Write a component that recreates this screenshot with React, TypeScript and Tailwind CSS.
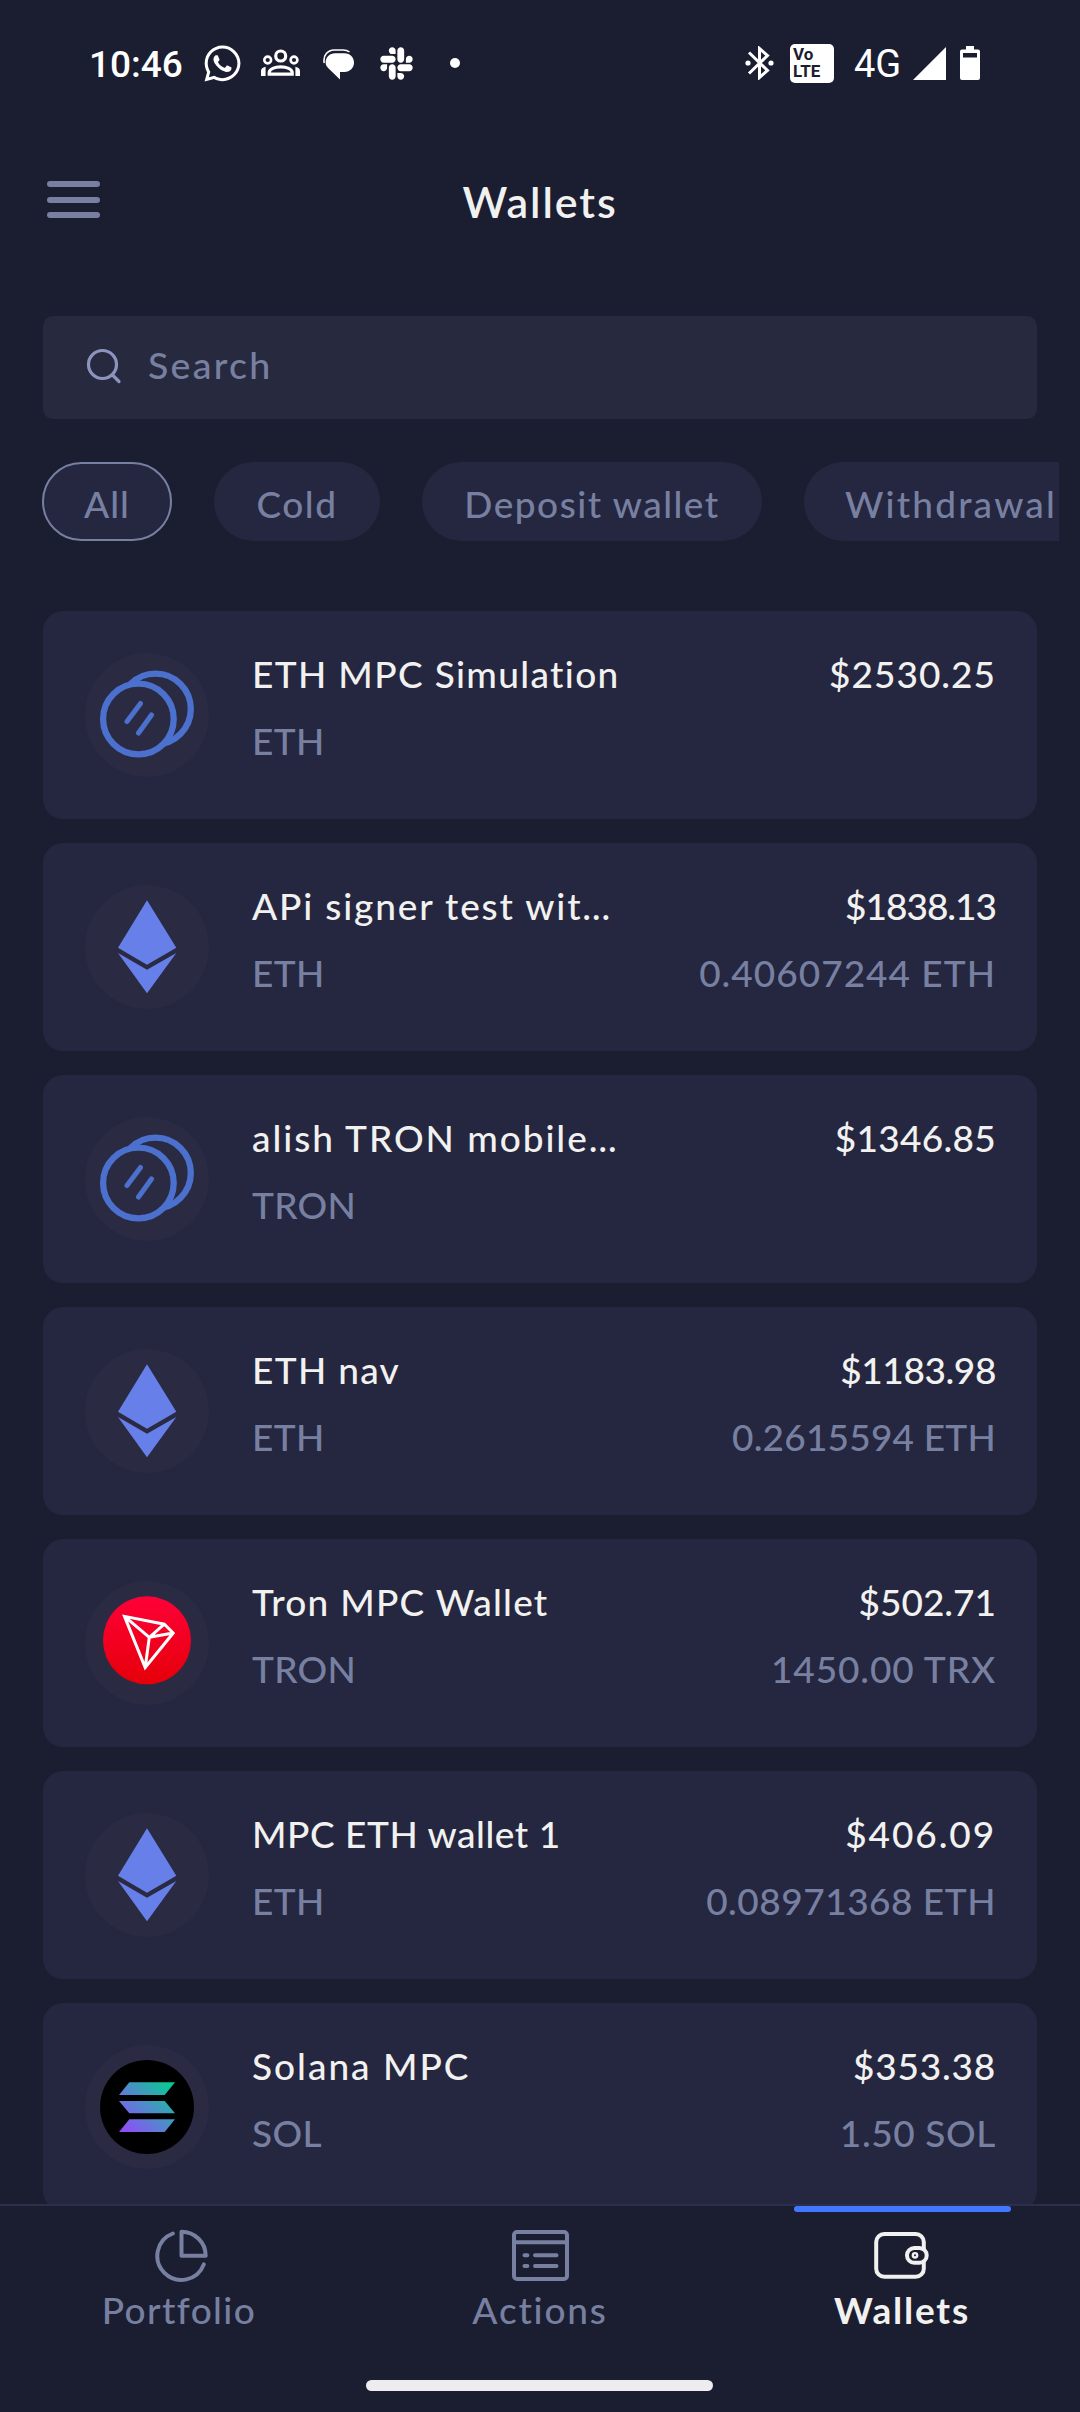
import React from "react";
import { FaSlack, FaWhatsapp } from "react-icons/fa";

type Coin = "multi" | "eth" | "tron" | "sol";

type Wallet = {
  name: string;
  nameClass: string;
  chain: string;
  fiat: string;
  fiatClass: string;
  amount?: string;
  amountClass?: string;
  coin: Coin;
};

const wallets: Wallet[] = [
  {
    name: "ETH MPC Simulation",
    nameClass: "tracking-[1.35px]",
    chain: "ETH",
    fiat: "$2530.25",
    fiatClass: "tracking-[1px]",
    coin: "multi",
  },
  {
    name: "APi signer test wit…",
    nameClass: "tracking-[1.85px]",
    chain: "ETH",
    fiat: "$1838.13",
    fiatClass: "tracking-[-1px]",
    amount: "0.40607244 ETH",
    amountClass: "tracking-[1px]",
    coin: "eth",
  },
  {
    name: "alish TRON mobile…",
    nameClass: "tracking-[1.95px]",
    chain: "TRON",
    fiat: "$1346.85",
    fiatClass: "tracking-[0.3px]",
    coin: "multi",
  },
  {
    name: "ETH nav",
    nameClass: "tracking-[1.3px]",
    chain: "ETH",
    fiat: "$1183.98",
    fiatClass: "tracking-[-0.4px]",
    amount: "0.2615594 ETH",
    amountClass: "tracking-[0.2px]",
    coin: "eth",
  },
  {
    name: "Tron MPC Wallet",
    nameClass: "tracking-[1.25px]",
    chain: "TRON",
    fiat: "$502.71",
    fiatClass: "tracking-normal",
    amount: "1450.00 TRX",
    amountClass: "tracking-[0.9px]",
    coin: "tron",
  },
  {
    name: "MPC ETH wallet 1",
    nameClass: "tracking-[0.55px]",
    chain: "ETH",
    fiat: "$406.09",
    fiatClass: "tracking-[1.9px]",
    amount: "0.08971368 ETH",
    amountClass: "tracking-[0.5px]",
    coin: "eth",
  },
  {
    name: "Solana MPC",
    nameClass: "tracking-[2px]",
    chain: "SOL",
    fiat: "$353.38",
    fiatClass: "tracking-[0.8px]",
    amount: "1.50 SOL",
    amountClass: "tracking-[0.6px]",
    coin: "sol",
  },
];

const filters = [
  { label: "All", className: "w-[130px] tracking-[1px]", active: true },
  { label: "Cold", className: "w-[166px] tracking-[1.5px]" },
  { label: "Deposit wallet", className: "w-[340px] tracking-[1.5px]" },
  { label: "Withdrawal", className: "w-[294px] tracking-[2.2px]" },
];

function StatusBar() {
  return (
    <div className="flex h-[126px] shrink-0 items-center pl-[89px] pr-[100px] font-[Roboto,sans-serif] text-white">
      <span className="w-[115px] pt-[3px] text-[37px] font-medium leading-none">10:46</span>
      <FaWhatsapp className="-ml-[2px] size-[41px]" />
      <svg className="ml-[18px]" width="39" height="28" viewBox="0 0 39 28" fill="none" stroke="currentColor">
        <circle cx="19.7" cy="7" r="5" strokeWidth="3.2" />
        <circle cx="6.7" cy="11" r="3.4" strokeWidth="2.6" />
        <circle cx="33" cy="11" r="3.4" strokeWidth="2.6" />
        <path d="M8.2 25.2v-1.6c0-3.6 5.6-5.8 11.5-5.8s11.5 2.2 11.5 5.8v1.6z" strokeWidth="3.2" />
        <path d="M0 27v-5c0-2 1.5-3.6 4.6-4.2v9.2zM39 27v-5c0-2-1.5-3.6-4.6-4.2v9.2z" fill="currentColor" stroke="none" />
      </svg>
      <svg className="ml-[23px] mt-[2px]" width="32" height="31" viewBox="0 0 32 31" fill="none">
        <path d="M1.2 14C-.2 6 5 1.2 11 1h9c3 0 5 .8 6.5 2" stroke="currentColor" strokeWidth="1.6" />
        <path
          d="M12 4.200h9.500c5.500 0 9.500 4 9.500 9.400s-4 9.400-9.500 9.400H17v7.500L5.600 19.500C3.600 17.800 2.600 16 2.600 13.600c0-5.400 4-9.400 9.400-9.400z"
          fill="currentColor"
        />
      </svg>
      <FaSlack className="ml-[23px] size-[37px]" />
      <span className="ml-[35px] size-[10px] rounded-full bg-white" />

      <div className="ml-auto flex items-center">
        <svg width="29" height="34" viewBox="0 0 29 34" fill="none" stroke="currentColor" strokeWidth="3">
          <path d="M4 6.500L22.500 24.500 14.500 31.500V2.500L22.500 9.500 4 27.500" />
          <circle cx="3" cy="17" r="2.600" fill="currentColor" stroke="none" />
          <circle cx="26" cy="17" r="2.600" fill="currentColor" stroke="none" />
        </svg>
        <div className="ml-[16px] flex h-[39px] w-[44px] flex-col justify-center rounded-[5px] bg-white pl-[3px] text-[17px] font-bold leading-[17px] text-[#1b1d31]">
          <span>Vo</span>
          <span>LTE</span>
        </div>
        <span className="ml-[20px] w-[59px] pt-[2px] text-[38px] font-normal leading-none">4G</span>
        <svg width="33" height="33" viewBox="0 0 33 33" fill="currentColor">
          <path d="M33 0v33H0z" />
        </svg>
        <svg className="ml-[14px]" width="20" height="34" viewBox="0 0 20 34" fill="currentColor">
          <path
            fillRule="evenodd"
            d="M6 0h8v3.500h4a2 2 0 0 1 2 2V32a2 2 0 0 1-2 2H2a2 2 0 0 1-2-2V5.500a2 2 0 0 1 2-2h4zM3 7v4.500h14V7z"
          />
        </svg>
      </div>
    </div>
  );
}

function Header() {
  return (
    <header className="grid h-[154px] shrink-0 grid-cols-3 px-[47px] pt-[50px]">
      <button className="mt-[5px] flex h-[37px] w-[53px] flex-col justify-between" aria-label="Menu">
        <span className="h-[6px] w-full rounded-full bg-[#7780a0]" />
        <span className="h-[6px] w-full rounded-full bg-[#7780a0]" />
        <span className="h-[6px] w-full rounded-full bg-[#7780a0]" />
      </button>
      <h1 className="text-center text-[43px] font-semibold leading-[52px] tracking-[1.9px] text-[#f1f1ef]">Wallets</h1>
    </header>
  );
}

function SearchBox() {
  return (
    <div className="mx-[43px] mt-[36px] flex h-[103px] shrink-0 items-center rounded-[10px] bg-[#27293f] pl-[43px]">
      <svg className="-mt-[4px]" width="36" height="36" viewBox="0 0 36 36" fill="none" stroke="#8c94bd" strokeWidth="3.200" strokeLinecap="round">
        <circle cx="16.500" cy="16.500" r="14" />
        <path d="M26.500 27L33 33.500" />
      </svg>
      <span className="-mt-[5px] ml-[26px] text-[37.5px] leading-none tracking-[2.3px]">Search</span>
    </div>
  );
}

function Filters() {
  return (
    <div className="ml-[42px] mr-[21px] mt-[43px] flex h-[79px] shrink-0 gap-[42px] overflow-hidden">
      {filters.map((filter) => (
        <button
          key={filter.label}
          className={`flex shrink-0 items-center justify-center whitespace-nowrap rounded-full bg-[#252640] pt-[3px] text-[37px] leading-none ${filter.className} ${
            filter.active ? "border-2 border-[#7780a0]" : ""
          }`}
        >
          {filter.label}
        </button>
      ))}
    </div>
  );
}

function CoinIcon({ coin }: { coin: Coin }) {
  return (
    <svg className="shrink-0" width="124" height="124" viewBox="0 0 124 124" fill="none">
      <circle cx="62" cy="62" r="62" fill="#2a2b42" />
      {coin === "multi" && (
        <g stroke="#4b70ce" strokeWidth="6.300" strokeLinecap="round">
          <circle cx="70.500" cy="56" r="35.300" />
          <circle cx="53.400" cy="66" r="35.300" fill="#2a2b42" />
          <path d="M55.500 50.500L42 68.500M66.500 62L53.500 80" strokeWidth="5" />
        </g>
      )}
      {coin === "eth" && (
        <g fill="#6780e9">
          <path d="M62 15.300L91.300 62.700 62 79.700 33 62.700z" />
          <path d="M33 68L62 84.700 91.300 68 62 108.300z" />
        </g>
      )}
      {coin === "tron" && (
        <>
          <defs>
            <linearGradient id="tron" x1="0" y1="0" x2="0" y2="1">
              <stop stopColor="#ff0038" />
              <stop offset="1" stopColor="#e50009" />
            </linearGradient>
          </defs>
          <circle cx="62" cy="59.300" r="44" fill="url(#tron)" />
          <path
            d="M39.500 35.400L79.300 43.200 88.200 52 60.200 86.500zL64.300 56.300 60.200 86.500M64.300 56.300L79.300 43.200M64.300 56.300L88.200 52"
            stroke="#fff"
            strokeWidth="3"
          />
        </>
      )}
      {coin === "sol" && (
        <>
          <defs>
            <linearGradient id="sol" gradientUnits="userSpaceOnUse" x1="37" y1="90" x2="88" y2="36">
              <stop stopColor="#9945ff" />
              <stop offset="0.500" stopColor="#4f8bcb" />
              <stop offset="1" stopColor="#00d18c" />
            </linearGradient>
          </defs>
          <circle cx="62" cy="62" r="47" fill="#000" />
          <path
            d="M44.300 37.300H90L79.700 50H34zM34 56h45.700L90 68.300H44.300zM44.300 74.300H90L79.700 87H34z"
            fill="url(#sol)"
          />
        </>
      )}
    </svg>
  );
}

function WalletCard({ wallet }: { wallet: Wallet }) {
  return (
    <div className="flex h-[208px] shrink-0 rounded-[20px] bg-[#252640] pl-[42px] pr-[41px] pt-[29px]">
      <div className="pt-[13px]">
        <CoinIcon coin={wallet.coin} />
      </div>
      <div className="ml-[43px] flex-1 whitespace-nowrap text-[37px] leading-[67px]">
        <div className="flex justify-between text-[#f1f1ef]">
          <span className={wallet.nameClass}>{wallet.name}</span>
          <span className={wallet.fiatClass}>{wallet.fiat}</span>
        </div>
        <div className="flex justify-between">
          <span className="tracking-[0.3px]">{wallet.chain}</span>
          <span className={wallet.amountClass}>{wallet.amount}</span>
        </div>
      </div>
    </div>
  );
}

function BottomNav() {
  return (
    <nav className="h-[208px] shrink-0 border-t-2 border-[#2a2f4b]">
      <div className="grid h-[174px] grid-cols-3 text-[37px] leading-[51px]">
        <div className="flex flex-col items-center pr-[2px] pt-[22px]">
          <svg className="ml-[4px]" width="56" height="56" viewBox="0 0 56 56" fill="none" stroke="#7780a0" strokeWidth="4" strokeLinecap="round" strokeLinejoin="round">
            <path d="M28.500 3.700V27.700H52.700A24.200 24 0 0 0 28.500 3.700z" />
            <path d="M19.800 5.500A24 24 0 1 0 50.800 36.400" />
          </svg>
          <span className="tracking-[1.4px]">Portfolio</span>
        </div>
        <div className="flex flex-col items-center pt-[22px]">
          <svg width="61" height="56" viewBox="0 0 61 56" fill="none" stroke="#7780a0" strokeWidth="4" strokeLinecap="round">
            <rect x="4" y="4" width="53" height="47" rx="3" />
            <path d="M4 14.300H57M14.500 27.300H17.400M25 27.300H46.500M14.500 38H17.400M25 38H46.500" />
          </svg>
          <span className="tracking-[1.8px]">Actions</span>
        </div>
        <div className="flex flex-col items-center pl-[4px]">
          <span className="h-[6px] w-[217px] rounded-full bg-[#4278ff]" />
          <svg className="-ml-[3px] mt-[16px]" width="60" height="56" viewBox="0 0 60 56" fill="none" stroke="#f1f1ef" strokeWidth="4">
            <rect x="5.200" y="6" width="47.600" height="42.700" rx="8" />
            <rect x="36" y="20" width="19.700" height="14.700" rx="7.300" fill="#1b1d31" />
            <circle cx="44" cy="27.300" r="2.200" strokeWidth="2.400" />
          </svg>
          <span className="font-bold tracking-[1.8px] text-[#f1f1ef]">Wallets</span>
        </div>
      </div>
      <div className="mx-auto h-[11px] w-[347px] -translate-x-px rounded-full bg-[#ededef]" />
    </nav>
  );
}

export default function App() {
  return (
    <div className="flex h-[2412px] w-[1080px] flex-col overflow-hidden bg-[#1b1d31] font-[Lato,sans-serif] font-medium text-[#7780a0]">
      <StatusBar />
      <Header />
      <SearchBox />
      <Filters />
      <main className="mx-[43px] mt-[70px] flex min-h-0 flex-1 flex-col gap-[24px] overflow-hidden">
        {wallets.map((wallet) => (
          <WalletCard key={wallet.name} wallet={wallet} />
        ))}
      </main>
      <BottomNav />
    </div>
  );
}
